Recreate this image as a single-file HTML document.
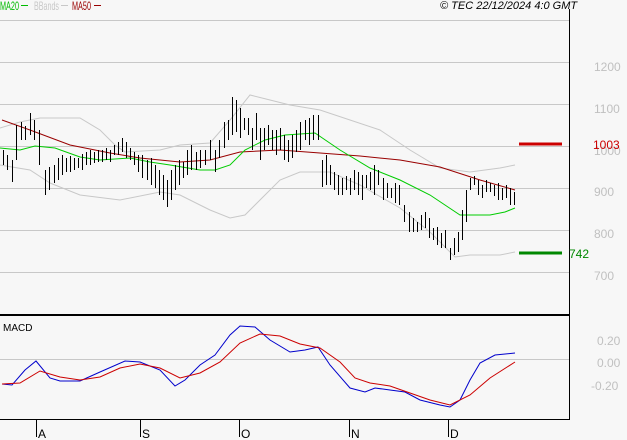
<!DOCTYPE html>
<html><head><style>
body{margin:0;background:#f7f7f7;width:627px;height:440px;overflow:hidden;font-family:"Liberation Sans",sans-serif}
svg{position:absolute;left:0;top:0}
</style></head><body>
<svg width="627" height="440" xmlns="http://www.w3.org/2000/svg" font-family="Liberation Sans, sans-serif">
<rect width="627" height="440" fill="#f7f7f7"/>
<g stroke="#c8c8c8" stroke-width="1">
<line x1="0" y1="20.5" x2="569" y2="20.5"/>
<line x1="0" y1="62.5" x2="569" y2="62.5"/>
<line x1="0" y1="104.5" x2="569" y2="104.5"/>
<line x1="0" y1="146.5" x2="569" y2="146.5"/>
<line x1="0" y1="188.5" x2="569" y2="188.5"/>
<line x1="0" y1="230.5" x2="569" y2="230.5"/>
<line x1="0" y1="272.5" x2="569" y2="272.5"/>
<line x1="0" y1="359.5" x2="569" y2="359.5"/>
</g>
<line x1="569.5" y1="9" x2="569.5" y2="420" stroke="#000"/>
<line x1="0" y1="315" x2="570" y2="315" stroke="#000" stroke-width="2"/>
<line x1="0" y1="419.5" x2="570" y2="419.5" stroke="#000"/>
<g stroke="#000"><line x1="36.5" y1="419" x2="36.5" y2="437"/><line x1="140.5" y1="419" x2="140.5" y2="437"/><line x1="239.5" y1="419" x2="239.5" y2="437"/><line x1="349.5" y1="419" x2="349.5" y2="437"/><line x1="448.5" y1="419" x2="448.5" y2="437"/></g>
<g font-size="12" fill="#000"><text x="38" y="438">A</text><text x="142" y="438">S</text><text x="241" y="438">O</text><text x="351" y="438">N</text><text x="450" y="438">D</text></g>
<g font-size="12" fill="#c0c0c0"><text x="594" y="71">1200</text><text x="594" y="113">1100</text><text x="594" y="155">1000</text><text x="594" y="196">900</text><text x="594" y="238">800</text><text x="594" y="280">700</text><text x="597" y="345">0.20</text><text x="597" y="367">0.00</text><text x="591" y="390">-0.20</text></g>
<text x="593" y="149" font-size="12" fill="#cc0000">1003</text>
<text x="569" y="258" font-size="12" fill="#008800">742</text>
<line x1="519" y1="144" x2="562" y2="144" stroke="#cc0000" stroke-width="3"/>
<line x1="519" y1="253" x2="562" y2="253" stroke="#008800" stroke-width="3"/>
<g font-size="12"><text x="0" y="10" fill="#00bb00" textLength="19" lengthAdjust="spacingAndGlyphs">MA20</text><line x1="21" y1="5.5" x2="28" y2="5.5" stroke="#00bb00"/>
<text x="34" y="10" fill="#c8c8c8" textLength="25" lengthAdjust="spacingAndGlyphs">BBands</text><line x1="61" y1="5.5" x2="68" y2="5.5" stroke="#c8c8c8"/>
<text x="72" y="10" fill="#990000" textLength="19" lengthAdjust="spacingAndGlyphs">MA50</text><line x1="94" y1="5.5" x2="101" y2="5.5" stroke="#990000"/></g>
<text x="440" y="9" font-size="11" font-style="italic" fill="#000">© TEC 22/12/2024 4:0 GMT</text>
<text x="3" y="331" font-size="10" fill="#000">MACD</text>
<g fill="none" stroke-width="1">
<polyline stroke="#c8c8c8" points="0,128 20,122 40,118 80,118 100,130 115,145 125,152 160,150 180,145 210,143 230,120 250,95 270,100 290,105 320,110 350,120 380,130 410,150 440,168 470,172 500,168 515,165"/>
<polyline stroke="#c8c8c8" points="0,165 30,170 50,183 80,195 120,200 160,192 180,195 210,210 230,218 245,215 260,200 280,180 300,172 330,172 360,185 400,208 430,232 455,257 470,255 500,255 515,252"/>
<polyline stroke="#990000" points="2,120 30,130 70,145 110,153 140,158 180,162 210,160 240,152 280,150 320,153 360,156 400,160 440,167 480,180 515,190"/>
<polyline stroke="#00cc00" points="0,148 20,150 35,146 55,148 80,157 100,160 130,158 150,162 170,165 200,170 215,170 230,165 245,150 265,140 285,135 315,133 340,150 370,168 400,180 430,195 460,215 490,215 505,212 515,208"/>
<polyline stroke="#0000cc" points="2,384 12,385 25,370 36,361 50,378 60,381 80,381 100,372 125,361 140,362 160,370 175,386 185,380 200,365 215,355 230,335 240,326 255,327 270,340 290,352 305,350 318,347 330,365 350,388 365,392 375,388 390,390 405,392 420,400 440,405 450,407 460,400 470,380 480,363 495,355 515,353"/>
<polyline stroke="#cc0000" points="2,384 20,383 40,371 60,377 80,380 100,377 120,368 140,364 160,368 180,378 200,373 220,362 240,343 260,334 280,336 300,344 320,348 340,362 355,378 370,383 390,386 410,393 430,400 450,405 470,395 490,378 515,362"/>
<path stroke="#000" stroke-width="1" d="M3.5 150V165M7.5 155V170M12.5 160V182M16.5 125V160M21.5 122V140M25.5 126V140M30.5 113V135M34.5 120V140M39.5 130V165M45.5 170V195M49.5 167V190M54.5 165V183M58.5 158V180M62.5 155V175M66.5 158V172M70.5 156V172M74.5 158V170M78.5 158V168M82.5 154V170M86.5 152V165M90.5 150V165M94.5 152V163M98.5 150V162M102.5 150V162M106.5 148V160M110.5 150V162M114.5 145V155M118.5 142V155M122.5 138V152M126.5 142V158M130.5 148V160M134.5 152V165M138.5 155V172M142.5 155V178M147.5 160V180M151.5 158V185M155.5 165V188M159.5 170V195M163.5 175V200M167.5 180V207M171.5 170V200M175.5 165V190M179.5 160V185M183.5 162V178M187.5 150V175M191.5 145V170M196.5 152V170M200.5 150V168M205.5 150V165M210.5 140V160M215.5 150V172M219.5 140V158M224.5 122V148M228.5 120V140M232.5 97V135M236.5 100V132M240.5 108V138M244.5 118V130M248.5 118V135M252.5 128V150M256.5 113V140M260.5 128V160M264.5 128V150M268.5 125V145M272.5 130V150M276.5 130V155M280.5 128V150M284.5 135V160M288.5 140V162M292.5 135V158M296.5 130V152M300.5 122V150M305.5 120V140M309.5 118V145M313.5 115V140M318.5 115V140M322.5 160V187M326.5 155V185M330.5 165V185M334.5 172V190M338.5 175V195M342.5 178V195M346.5 176V190M350.5 178V195M354.5 170V190M358.5 172V195M362.5 175V200M366.5 175V188M370.5 172V190M374.5 165V195M378.5 170V185M383.5 178V200M387.5 183V198M391.5 188V198M395.5 183V203M399.5 185V205M404.5 205V222M409.5 212V232M413.5 218V232M417.5 222V232M421.5 215V230M425.5 212V228M429.5 218V238M433.5 228V240M437.5 227V245M441.5 233V248M445.5 230V248M450.5 248V260M454.5 238V255M458.5 232V252M462.5 210V240M466.5 190V222M470.5 178V190M474.5 176V185M478.5 180V195M482.5 185V198M486.5 180V192M490.5 183V192M494.5 185V196M498.5 183V200M502.5 188V200M506.5 185V198M510.5 188V205M514.5 192V205"/>
</g>
</svg>
</body></html>
